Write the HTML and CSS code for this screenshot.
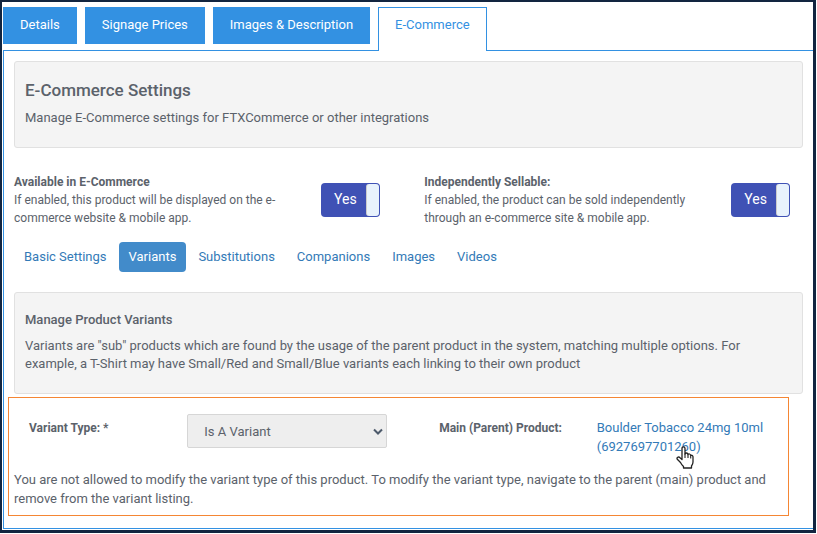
FILE: index.html
```html
<!DOCTYPE html>
<html lang="en">
<head>
    <meta charset="UTF-8">
    <meta name="viewport" content="width=device-width, initial-scale=1.0">
    <title>E-Commerce Settings</title>
    <link rel="stylesheet" href="styles.css">
</head>
<body>

<main class="page">
    <nav class="tabs">
        <a href="#details" class="tab">Details</a>
        <a href="#prices" class="tab">Signage Prices</a>
        <a href="#description" class="tab">Images &amp; Description</a>
        <a href="#ecommerce" class="tab active">E-Commerce</a>
    </nav>

    <div class="panel">
        <section class="well">
            <h1>E-Commerce Settings</h1>
            <p>Manage E-Commerce settings for FTXCommerce or other integrations</p>
        </section>

        <div class="switches">
            <div class="setting">
                <div class="setting-text">
                    <label for="available">Available in E-Commerce</label>
                    <p>If enabled, this product will be displayed on the e-commerce website &amp; mobile app.</p>
                </div>
                <label class="toggle">
                    <input type="checkbox" id="available" checked>
                    <span class="toggle-text">Yes</span>
                    <span class="knob"></span>
                </label>
            </div>
            <div class="setting">
                <div class="setting-text">
                    <label for="sellable">Independently Sellable:</label>
                    <p>If enabled, the product can be sold independently through an e-commerce site &amp; mobile app.</p>
                </div>
                <label class="toggle">
                    <input type="checkbox" id="sellable" checked>
                    <span class="toggle-text">Yes</span>
                    <span class="knob"></span>
                </label>
            </div>
        </div>

        <nav class="pills">
            <a href="#basic">Basic Settings</a>
            <a href="#variants" class="active">Variants</a>
            <a href="#substitutions">Substitutions</a>
            <a href="#companions">Companions</a>
            <a href="#images">Images</a>
            <a href="#videos">Videos</a>
        </nav>

        <section class="well">
            <h2>Manage Product Variants</h2>
            <p>Variants are "sub" products which are found by the usage of the parent product in the system, matching multiple options. For example, a T-Shirt may have Small/Red and Small/Blue variants each linking to their own product</p>
        </section>

        <section class="variant">
            <div class="fields">
                <label for="variant-type">Variant Type: *</label>
                <div class="select-wrap">
                    <select id="variant-type" disabled>
                        <option>Is A Variant</option>
                    </select>
                    <svg class="arrow" width="10" height="8" viewBox="0 0 10 8"><path d="M1 1.5L5 5.5L9 1.5" fill="none" stroke="#4d5a6b" stroke-width="2"/></svg>
                </div>
                <span class="field-name">Main (Parent) Product:</span>
                <a href="#parent" class="parent">Boulder Tobacco 24mg 10ml <span class="code">(6927697701260)<svg class="pointer" width="18" height="23" viewBox="0 0 18 23"><path d="M6 13.5V2.5Q6 .8 7.5 .8T9 2.5V8Q9.3 7 10.5 7T12 8.5Q12.5 7.7 13.5 8T14.7 9.5Q15.5 9 16.3 9.6T17 11V16Q17 18 15.5 20V22H7.5V20.5Q5.5 18.5 4.500 16.5L1.3 13.3Q.5 12 1.7 11.3T4 11.8L6 13.5Z" fill="#fff" stroke="#222" stroke-width="1.3" stroke-linejoin="round"/><path d="M9 7.5V12M12 8.5V12M14.7 9.5V12.5" stroke="#222" stroke-width="1.1"/></svg></span></a>
            </div>
            <p>You are not allowed to modify the variant type of this product. To modify the variant type, navigate to the parent (main) product and remove from the variant listing.</p>
        </section>
    </div>
</main>

</body>
</html>
```
FILE: styles.css
```css
* {
    box-sizing: border-box;
}

body {
    margin: 0;
    padding: 0 1px 1px 0;
    font-family: Roboto, Arial, sans-serif;
    font-size: 13px;
    line-height: 18px;
    color: #5b626b;
    background-color: #fff;
}

.page {
    border: solid #122540;
    border-width: 2px 3px 3px 2px;
    padding: 5px 0 1px 1px;
}

h1, h2, p {
    margin: 0;
}

a {
    color: #337ab7;
    text-decoration: none;
}

.tabs {
    display: flex;
    align-items: flex-start;
    gap: 8px;
}

.tab {
    padding: 8px 16px 9px;
    border: 1px solid #3391e2;
    background-color: #3391e2;
    color: #fff;
}

.tab.active {
    margin-bottom: -1px;
    padding-bottom: 17px;
    border-bottom: none;
    background-color: #fff;
    color: #3391e2;
}

.panel {
    border: 1px solid #3391e2;
    border-right: none;
    padding: 10px 10px 12px;
}

.well {
    padding: 18px 10px 20px;
    border: 1px solid #e1e1e1;
    border-radius: 3px;
    background-color: #f4f4f4;
}

.well h1 {
    margin-bottom: 9px;
    font-size: 17px;
    font-weight: 500;
    line-height: 20px;
}

.well h2 {
    margin-bottom: 8px;
    font-size: 13px;
    font-weight: 500;
}

.switches {
    display: grid;
    grid-template-columns: 52% 48%;
    padding: 25px 0 15px;
}

.setting {
    display: flex;
    align-items: center;
    gap: 32px;
    font-size: 12px;
}

.setting-text {
    width: 275px;
}

.setting-text label,
.fields label,
.field-name {
    font-size: 12px;
    font-weight: bold;
}

.toggle {
    position: relative;
    display: flex;
    width: 59px;
    height: 34px;
    padding: 1px;
    border-radius: 4px;
    background-color: #3f51b5;
    color: #fff;
    font-size: 14px;
    line-height: 30px;
    cursor: pointer;
}

.toggle input {
    position: absolute;
    inset: 0;
    margin: 0;
    opacity: 0;
}

.toggle-text {
    flex: 1;
    padding-left: 12px;
}

.knob {
    width: 13px;
    border-left: 1px solid #ccc;
    border-radius: 3px;
    background-color: #e8f2fc;
}

.pills {
    display: flex;
    gap: 2px;
    margin-bottom: 20px;
}

.pills a {
    padding: 6px 10px;
    border-radius: 4px;
}

.pills .active {
    background-color: #428bca;
    color: #fff;
}

.variant {
    margin: 3px 14px 0 -6px;
    padding: 16px 5px 7px;
    border: 1px solid #f58634;
    line-height: 19px;
}

.fields {
    display: grid;
    grid-template-columns: 21% 26.5% 27.8% 1fr;
    align-items: start;
    padding-left: 15px;
    margin-bottom: 14px;
}

.fields label,
.field-name {
    padding-top: 5px;
}

.field-name {
    padding-left: 52px;
    white-space: nowrap;
}

.select-wrap {
    position: relative;
}

.select-wrap select {
    width: 100%;
    height: 34px;
    padding: 0 16px;
    border: 1px solid #d6d6d6;
    border-radius: 2px;
    appearance: none;
    background-color: #eee;
    color: #5b626b;
    font-family: inherit;
    font-size: 13px;
    opacity: 1;
}

.arrow {
    position: absolute;
    top: 14px;
    right: 4px;
}

.parent {
    padding-top: 4px;
}

.code {
    position: relative;
}

.pointer {
    position: absolute;
    top: 7px;
    right: 7px;
}
```
